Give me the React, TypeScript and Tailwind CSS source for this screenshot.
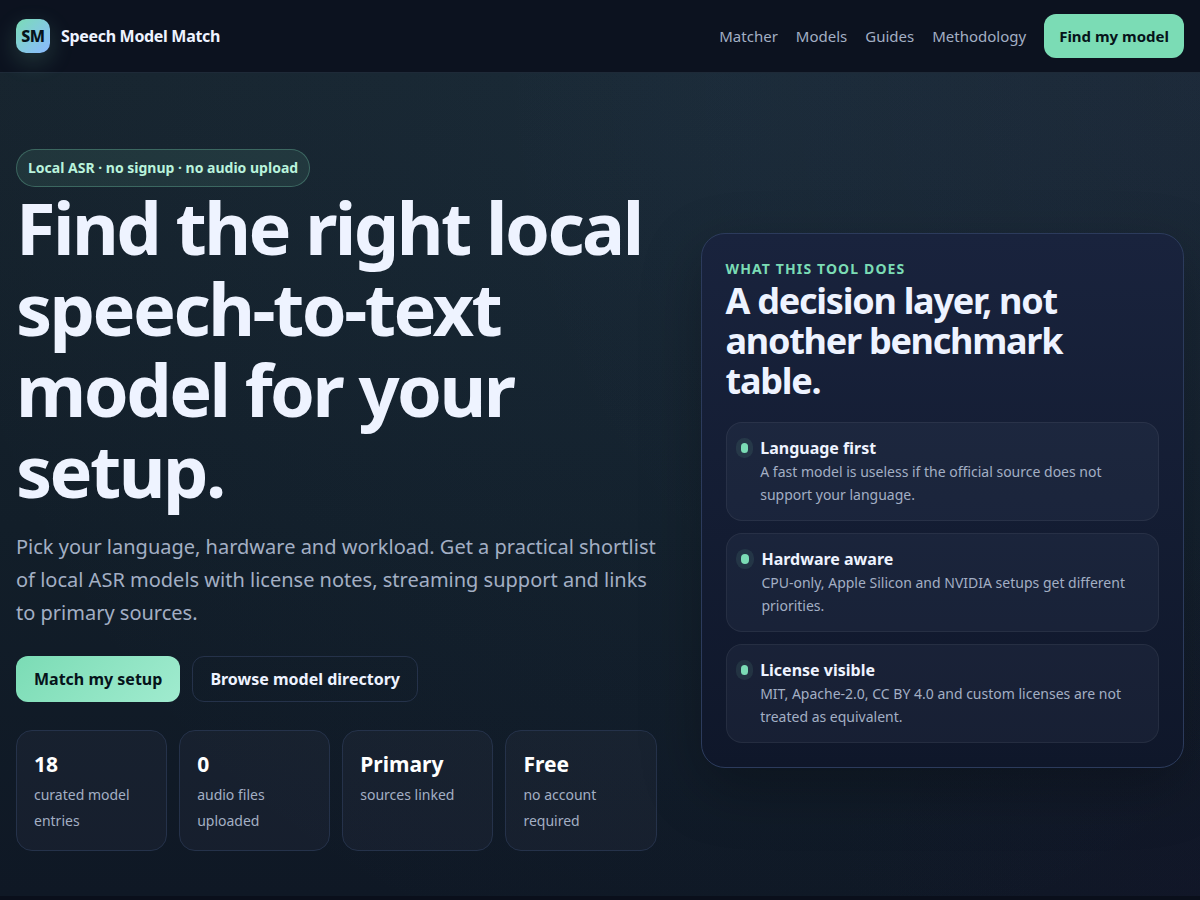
const navLinks = ['Matcher', 'Models', 'Guides', 'Methodology']

const stats = [
  { value: '18',      label: 'curated model entries' },
  { value: '0',       label: 'audio files uploaded' },
  { value: 'Primary', label: 'sources linked' },
  { value: 'Free',    label: 'no account required' },
]

const points = [
  { title: 'Language first',  body: 'A fast model is useless if the official source does not support your language.' },
  { title: 'Hardware aware',  body: 'CPU-only, Apple Silicon and NVIDIA setups get different priorities.' },
  { title: 'License visible', body: 'MIT, Apache-2.0, CC BY 4.0 and custom licenses are not treated as equivalent.' },
]

function Header() {
  return (
    <header className="bg-[#0c121f] border-b border-[#1e2a38]">
      <div className="flex items-center justify-between px-4 py-[14px]">
        <a href="#top" className="flex items-center gap-[11px] text-base font-bold tracking-[-0.02em]">
          <span className="grid place-items-center size-[34px] rounded-[10px] bg-linear-135 from-[#7bdcb5] to-[#8bb8ff] font-extrabold text-[#06131a] shadow-[0_8px_24px_rgba(123,220,181,0.2)]">
            SM
          </span>
          Speech Model Match
        </a>
        <nav className="flex items-center gap-[18px] text-[15px] text-[#a3afc4]">
          {navLinks.map((link) => (
            <a key={link} href={`#${link.toLowerCase()}`}>{link}</a>
          ))}
          <a href="#matcher" className="flex items-center h-11 px-[15px] rounded-xl bg-[#7bdcb5] font-bold text-[#06131a]">
            Find my model
          </a>
        </nav>
      </div>
    </header>
  )
}

function Intro() {
  return (
    <div>
      <span className="flex w-fit items-center h-[38px] px-[11px] rounded-full border border-[#7bdcb5]/30 bg-[#7bdcb5]/10 text-sm font-bold text-[#b9f3dc]">
        Local ASR · no signup · no audio upload
      </span>
      <h1 className="text-[72px] leading-[81px] font-bold tracking-[-0.035em]">
        Find the right local speech-to-text model for your setup.
      </h1>
      <p className="mt-[19px] text-xl leading-[33px] text-[#a3afc4]">
        Pick your language, hardware and workload. Get a practical shortlist of local ASR models with license notes, streaming support and links to primary sources.
      </p>

      <div className="mt-[27px] flex flex-wrap gap-3 font-bold">
        <a href="#matcher" className="flex items-center h-[46px] px-[18px] rounded-xl bg-linear-135 from-[#7bdcb5] to-[#a0ebcf] text-[#06131a]">
          Match my setup
        </a>
        <a href="#models" className="flex items-center h-[46px] px-[17px] rounded-xl border border-[#25324a]">
          Browse model directory
        </a>
      </div>

      <div className="mt-7 grid grid-cols-4 gap-3">
        {stats.map((stat) => (
          <div key={stat.value} className="px-[17px] py-4 rounded-2xl border border-[#25324a] bg-[#94a3c8]/5">
            <strong className="block text-[21px] leading-[34px] font-bold text-white">{stat.value}</strong>
            <span className="block mt-px text-sm leading-[26px] text-[#a3afc4]">{stat.label}</span>
          </div>
        ))}
      </div>
    </div>
  )
}

function ToolPanel() {
  return (
    <aside className="p-6 rounded-3xl border border-[#2c3b5c] bg-linear-to-b from-[#19233d] to-[#0f172a] shadow-[0_20px_60px_rgba(0,0,0,0.25)]">
      <p className="text-sm leading-[22px] font-bold uppercase tracking-[0.08em] text-[#7bdcb5]">What this tool does</p>
      <h2 className="mt-px text-4xl leading-[40px] font-bold tracking-[-0.035em]">
        A decision layer, not another benchmark table.
      </h2>
      <ul className="mt-[21px] flex flex-col gap-3">
        {points.map((point) => (
          <li key={point.title} className="flex gap-3 p-[14px] rounded-2xl border border-white/6 bg-[#94a3c8]/6">
            <span className="mt-[6px] size-[10px] rounded-full bg-[#7bdcb5] shadow-[0_0_0_5px_rgba(123,220,181,0.1)]" />
            <div>
              <strong className="block leading-[22px] font-bold">{point.title}</strong>
              <p className="mt-px text-sm leading-[23px] text-[#a3afc4]">{point.body}</p>
            </div>
          </li>
        ))}
      </ul>
    </aside>
  )
}

export default function App() {
  return (
    <div id="top" className="min-h-screen bg-[#0a0f1b] font-['Noto_Sans',sans-serif] text-[#eef3ff]">
      <Header />
      <main>
        <section className="grid grid-cols-[53fr_40fr] items-center gap-11 px-4 pt-[76px] pb-[45px] bg-[radial-gradient(circle_at_100%_0%,rgba(139,130,255,0.04),transparent_50%),radial-gradient(ellipse_at_60%_0%,rgba(80,150,210,0.06),transparent_80%),radial-gradient(circle_at_100%_100%,rgba(30,10,60,0.12),transparent_25%),linear-gradient(180deg,#17242e_0%,#121e29_55%,#0f1825_100%)]">
          <Intro />
          <ToolPanel />
        </section>
      </main>
    </div>
  )
}
